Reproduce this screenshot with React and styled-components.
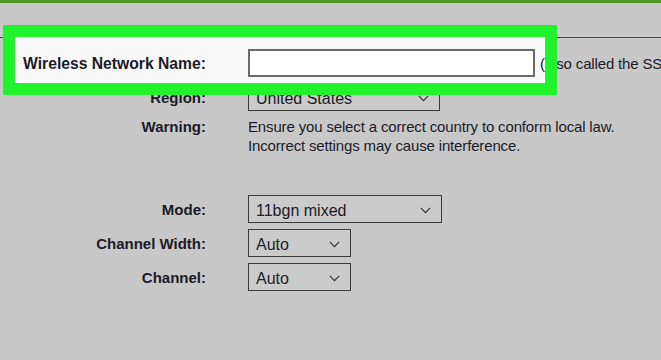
import React from "react";
import styled, { createGlobalStyle } from "styled-components";

const GlobalStyle = createGlobalStyle`
  html, body {
    margin: 0;
    padding: 0;
    background: #c8c8c8;
  }
  body {
    font-family: "Liberation Sans", Arial, sans-serif;
    color: #1b1b27;
  }
`;

const Page = styled.div`
  width: 661px;
  height: 360px;
  overflow: hidden;
  background: #c8c8c8;
`;

const TopBar = styled.div`
  height: 3px;
  background: #4f9b2a;
`;

const Form = styled.div`
  margin-top: 34px;
`;

const Row = styled.div`
  display: grid;
  grid-template-columns: 206px 1fr;
  column-gap: 42px;
  align-items: ${(p) => (p.$top ? "start" : "center")};
  margin-top: ${(p) => p.$gap || 0}px;
`;

/* the name row carries the green annotation frame drawn over it */
const HighlightRow = styled(Row)`
  position: relative;
  height: 40px;
  padding-top: 5px;
  border-top: 1px solid #474747;

  &::before {
    content: "";
    position: absolute;
    left: 15px;
    top: -1px;
    width: 530px;
    height: 46px;
    background: #f9f9f9;
    z-index: 0;
  }

  &::after {
    content: "";
    position: absolute;
    left: 3px;
    top: -13px;
    width: 530px;
    height: 46px;
    border: 12px solid #20f22c;
    z-index: 2;
  }

  & > * {
    position: relative;
    z-index: 1;
  }
`;

const Label = styled.div`
  text-align: right;
  font-weight: bold;
  font-size: ${(p) => p.$size || 15}px;
  line-height: 19px;
  white-space: nowrap;
`;

const Value = styled.div`
  display: flex;
  align-items: center;
  font-size: 15px;
  letter-spacing: -0.15px;
  line-height: 19px;
  white-space: nowrap;
`;

const Note = styled.div`
  font-size: 15px;
  letter-spacing: -0.15px;
  line-height: 19px;
  white-space: nowrap;
`;

const TextInput = styled.div`
  width: 283px;
  height: 24px;
  border: 2px solid #6a6a6a;
  background: #ffffff;
`;

const Hint = styled.span`
  margin-left: 5px;
`;

const SelectBox = styled.div`
  box-sizing: border-box;
  width: ${(p) => p.$width}px;
  height: 28px;
  display: flex;
  align-items: center;
  justify-content: space-between;
  padding: 3px 10px 0 7px;
  border: 1px solid #3a3a3a;
  background: #cbcbcb;
  font-size: 16px;
  letter-spacing: 0;
`;

const Chevron = () => (
  <svg width="11" height="7" viewBox="0 0 11 7">
    <path d="M0.8 0.8 L5.5 5.6 L10.2 0.8" fill="none" stroke="#333" strokeWidth="1.2" />
  </svg>
);

const Select = ({ value, width }) => (
  <SelectBox $width={width}>
    <span>{value}</span>
    <Chevron />
  </SelectBox>
);

export default function App() {
  return (
    <Page>
      <GlobalStyle />
      <TopBar />
      <Form>
        <HighlightRow>
          <Label $size={15.7}>Wireless Network Name:</Label>
          <Value>
            <TextInput />
            <Hint>(also called the SSID)</Hint>
          </Value>
        </HighlightRow>
        <Row>
          <Label>Region:</Label>
          <Value>
            <Select value="United States" width={192} />
          </Value>
        </Row>
        <Row $gap={6} $top>
          <Label>Warning:</Label>
          <Note>
            Ensure you select a correct country to conform local law.
            <br />
            Incorrect settings may cause interference.
          </Note>
        </Row>
        <Row $gap={40}>
          <Label>Mode:</Label>
          <Value>
            <Select value="11bgn mixed" width={194} />
          </Value>
        </Row>
        <Row $gap={6}>
          <Label>Channel Width:</Label>
          <Value>
            <Select value="Auto" width={103} />
          </Value>
        </Row>
        <Row $gap={6}>
          <Label>Channel:</Label>
          <Value>
            <Select value="Auto" width={103} />
          </Value>
        </Row>
      </Form>
    </Page>
  );
}
